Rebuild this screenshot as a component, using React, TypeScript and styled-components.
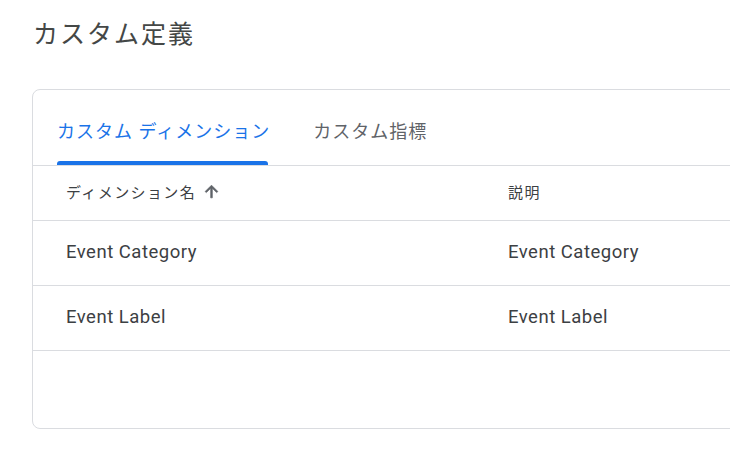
import React, { useState } from 'react';
import styled, { createGlobalStyle } from 'styled-components';

const GlobalStyle = createGlobalStyle`
  html, body {
    margin: 0;
    padding: 0;
    background: #ffffff;
    overflow: hidden;
  }
  body {
    font-family: Roboto, "Noto Sans CJK JP", sans-serif;
    color: #3c4043;
  }
`;

interface Row {
  name: string;
  description: string;
}

const rows: Row[] = [
  { name: 'Event Category', description: 'Event Category' },
  { name: 'Event Label', description: 'Event Label' },
];

const tabs = ['カスタム ディメンション', 'カスタム指標'];

const App: React.FC = () => {
  const [activeTab, setActiveTab] = useState(0);

  return (
    <>
      <GlobalStyle />
      <Page>
        <Title>カスタム定義</Title>
        <Card>
          <TabBar>
            {tabs.map((label, i) => (
              <Tab key={label} $active={i === activeTab} onClick={() => setActiveTab(i)}>
                {label}
              </Tab>
            ))}
          </TabBar>
          <HeaderRow>
            <HeaderCell>
              ディメンション名
              <SortIcon viewBox="0 0 24 24">
                <path d="M4 12l1.41 1.41L11 7.83V20h2V7.83l5.58 5.59L20 12l-8-8-8 8z" />
              </SortIcon>
            </HeaderCell>
            <HeaderCell>説明</HeaderCell>
          </HeaderRow>
          {rows.map((row) => (
            <DataRow key={row.name}>
              <Cell>{row.name}</Cell>
              <Cell>{row.description}</Cell>
            </DataRow>
          ))}
        </Card>
      </Page>
    </>
  );
};

const Page = styled.div`
  padding: 16px 0 0 32px;
  width: 698px;
`;

const Title = styled.h1`
  margin: 0 0 0 1px;
  font-size: 25px;
  line-height: 38px;
  font-weight: 400;
  letter-spacing: 2px;
  color: #444746;
`;

const Card = styled.div`
  margin-top: 35px;
  margin-right: -40px;
  height: 340px;
  box-sizing: border-box;
  border: 1px solid #dadce0;
  border-radius: 8px;
  overflow: hidden;
`;

const TabBar = styled.div`
  display: flex;
  gap: 43px;
  padding-left: 24px;
  height: 75px;
  border-bottom: 1px solid #dadce0;
`;

const Tab = styled.div<{ $active: boolean }>`
  position: relative;
  display: flex;
  align-items: center;
  padding-top: 4px;
  font-size: 18px;
  letter-spacing: 1px;
  white-space: nowrap;
  cursor: pointer;
  color: ${(props) => (props.$active ? '#1a73e8' : '#5f6368')};

  &::after {
    content: '';
    display: ${(props) => (props.$active ? 'block' : 'none')};
    position: absolute;
    left: 0;
    right: 2px;
    bottom: 0;
    height: 4px;
    border-radius: 3px 3px 0 0;
    background: #1a73e8;
  }
`;

const Grid = styled.div`
  display: grid;
  grid-template-columns: 442px 1fr;
  border-bottom: 1px solid #dadce0;
`;

const HeaderRow = styled(Grid)`
  height: 55px;
  box-sizing: border-box;
`;

const DataRow = styled(Grid)`
  height: 65px;
  box-sizing: border-box;
`;

const HeaderCell = styled.div`
  display: flex;
  align-items: center;
  gap: 6px;
  padding: 0 0 4px 33px;
  font-size: 15px;
  letter-spacing: 1.4px;
  color: #3c4043;
`;

const SortIcon = styled.svg`
  width: 19px;
  height: 19px;
  fill: #5f6368;
  stroke: #5f6368;
  stroke-width: 0.9px;
`;

const Cell = styled.div`
  display: flex;
  align-items: center;
  padding: 0 0 3px 33px;
  font-size: 18.5px;
  letter-spacing: 0.5px;
  color: #3c4043;
`;

export default App;
